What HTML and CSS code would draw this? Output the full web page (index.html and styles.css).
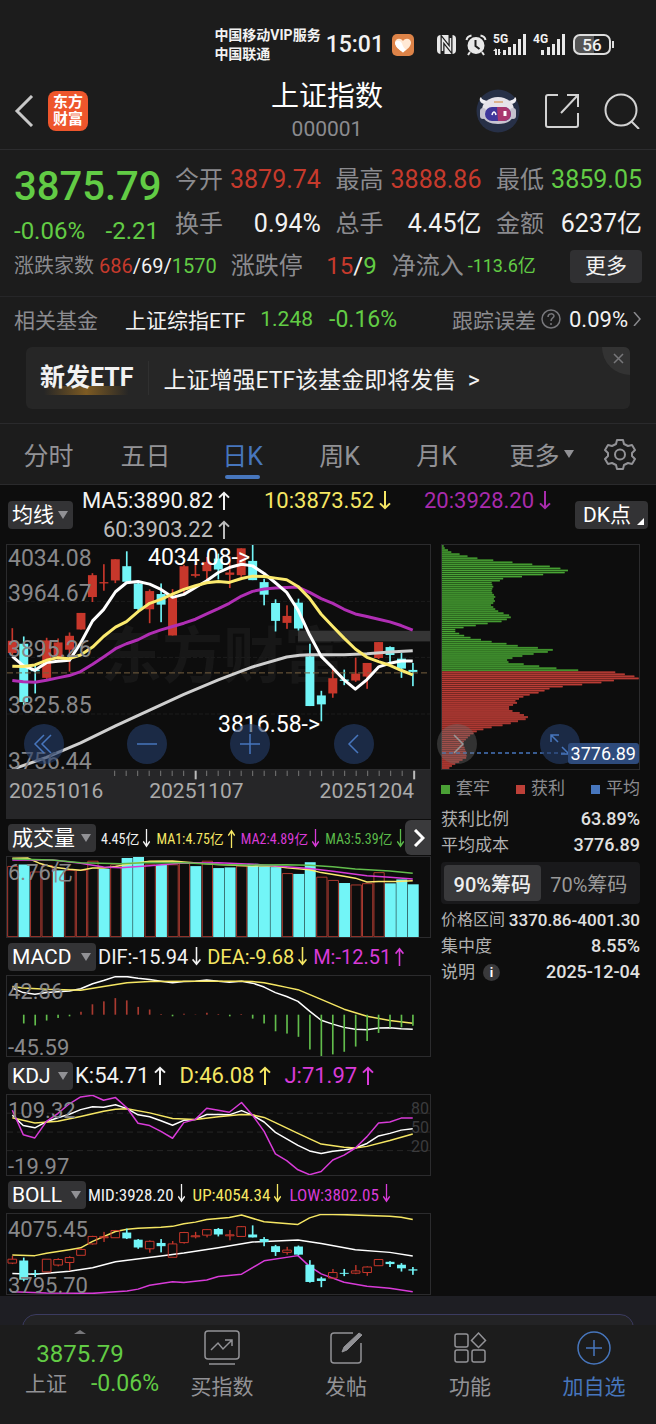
FILE: index.html
```html
<!DOCTYPE html>
<html lang="zh-CN">
<head>
    <meta charset="UTF-8">
    <meta name="viewport" content="width=device-width, initial-scale=1.0">
    <title>上证指数 000001</title>
    <link rel="stylesheet" href="styles.css">
</head>
<body>

<svg class="symbols" width="0" height="0">
    <symbol id="rise" viewBox="0 0 14 20" preserveAspectRatio="none"><path d="M7 20V2M2 7l5-5 5 5"/></symbol>
    <symbol id="fall" viewBox="0 0 14 20" preserveAspectRatio="none"><path d="M7 0v18M2 13l5 5 5-5"/></symbol>
</svg>

<div class="status-bar">
    <div class="carrier"><span>中国移动VIP服务</span><span>中国联通</span></div>
    <span class="clock">15:01</span>
    <svg class="heart" width="22" height="22" viewBox="0 0 22 22">
        <rect width="22" height="22" rx="5" fill="#dd8348"/>
        <path d="M11 18.500C7 15.500 3 12.500 3 8.500 3 4.500 8.500 3 11 7c2.500-4 8-2.500 8 1.500 0 4-4 7-8 10z" fill="#ffe9d5"/>
        <path d="M11 18.500C7 15.500 3 12.500 3 8.500c2-3 6-2 7 1 1 3 2 5 4 6z" fill="#fff"/>
    </svg>
    <svg class="nfc" width="21" height="21" viewBox="0 0 21 21" fill="none">
        <rect x="1" y="1" width="19" height="19" rx="4" fill="#e8e8e8"/>
        <path d="M6.500 21V5.500L14.500 15.500V0" stroke="#1c1c1c" stroke-width="4"/>
        <path d="M6.500 17V5.500L14.500 15.500V4" stroke="#e8e8e8" stroke-width="1.500"/>
    </svg>
    <svg class="alarm" width="22" height="22" viewBox="0 0 22 22" fill="none" stroke="#e8e8e8" stroke-width="2">
        <circle cx="11" cy="11.500" r="7.500" fill="#e8e8e8"/>
        <path d="M1.500 6C2 3.500 4 2 6.500 1.500M20.500 6C20 3.500 18 2 15.500 1.500M5 18l-2 3M17 18l2 3"/>
        <path d="M10.500 6v6l4 3" stroke="#1c1c1c"/>
    </svg>
    <div class="signal">
        <span>5G</span>
        <svg width="34" height="21" viewBox="0 0 34 21" fill="#e8e8e8">
            <path d="M10 16h3v5h-3zM15 13h3v8h-3zM20 10h3v11h-3zM25 5h3v16h-3zM30 0h3v21h-3zM2 15h2v6H2zM0 17l3-3v3zM5 15h2v6H5zM8 18l-2 3v-3z"/>
        </svg>
    </div>
    <div class="signal">
        <span>4G</span>
        <svg width="34" height="21" viewBox="0 0 34 21" fill="#e8e8e8">
            <path d="M8 16h3v5H8zM14 13h3v8h-3zM19 10h3v11h-3zM24 5h3v16h-3zM29 0h3v21h-3z"/>
        </svg>
    </div>
    <span class="battery">56</span>
</div>

<header class="top-bar">
    <div class="top-left">
        <button class="icon-button" aria-label="返回">
            <svg width="20" height="32" viewBox="0 0 20 32" fill="none" stroke="#c8c8c8" stroke-width="3"><path d="M18 1L3 16l15 15"/></svg>
        </button>
        <div class="logo"><span>东方</span><span>财富</span></div>
    </div>
    <div class="title">
        <h1>上证指数</h1>
        <p>000001</p>
    </div>
    <div class="top-right">
        <button class="icon-button" aria-label="智能助手">
            <svg width="44" height="44" viewBox="0 0 44 44">
                <circle cx="22" cy="22" r="21.500" fill="#273047"/>
                <path d="M8 15C3 14 3 9 5 8c1 3 3 3 7 4zM36 15c5-1 5-6 3-7-1 3-3 3-7 4z" fill="#f0eef3"/>
                <ellipse cx="22" cy="21" rx="16" ry="13" fill="#e6e3ea"/>
                <rect x="4" y="19" width="6" height="11" rx="3" fill="#c5c2cf"/>
                <rect x="34" y="19" width="6" height="11" rx="3" fill="#c5c2cf"/>
                <path d="M7 26c0-9 30-9 30 0 0 12-30 12-30 0z" fill="#c8c5d2"/>
                <rect x="9" y="18" width="26" height="14" rx="7" fill="#40389b"/>
                <path d="M21 18h7c9 0 9 14 0 14h-6z" fill="#a9376f"/>
                <path d="M16 26c1-4 3-4 4 0" fill="none" stroke="#fff" stroke-width="1.500"/>
                <path d="M29 22v5" stroke="#fff" stroke-width="3"/>
                <path d="M18 13h9" stroke="#ddb38e" stroke-width="2"/>
            </svg>
        </button>
        <button class="icon-button" aria-label="分享">
            <svg width="36" height="36" viewBox="0 0 36 36" fill="none" stroke="#d2d2d2" stroke-width="2"><path d="M14 2H4a2 2 0 0 0-2 2v28a2 2 0 0 0 2 2h28a2 2 0 0 0 2-2V20M23 2h11v12M34 2L17 20"/></svg>
        </button>
        <button class="icon-button" aria-label="搜索">
            <svg width="36" height="36" viewBox="0 0 36 36" fill="none" stroke="#d2d2d2" stroke-width="2"><circle cx="17" cy="17" r="15.500"/><path d="M27 28l8 8"/></svg>
        </button>
    </div>
</header>

<section class="quote">
    <div class="quote-main">
        <div class="price-box">
            <strong class="price down">3875.79</strong>
            <div class="change down"><span>-0.06%</span><span>-2.21</span></div>
        </div>
        <dl class="facts">
            <div><dt>今开</dt><dd class="up">3879.74</dd></div>
            <div><dt>最高</dt><dd class="up">3888.86</dd></div>
            <div><dt>最低</dt><dd class="down">3859.05</dd></div>
            <div><dt>换手</dt><dd>0.94%</dd></div>
            <div><dt>总手</dt><dd>4.45亿</dd></div>
            <div><dt>金额</dt><dd>6237亿</dd></div>
        </dl>
    </div>
    <div class="quote-more">
        <span class="breadth"><span class="label">涨跌家数</span> <span class="up">686</span>/69/<span class="down">1570</span></span>
        <span class="limit"><span class="label">涨跌停</span><span><span class="up">15</span>/<span class="down">9</span></span></span>
        <span class="flow"><span class="label">净流入</span><span class="down">-113.6亿</span></span>
        <button class="more-button">更多</button>
    </div>
</section>

<section class="fund">
    <span class="label">相关基金</span>
    <a class="fund-name" href="#">上证综指ETF</a>
    <span class="down fund-price">1.248</span>
    <span class="down fund-change">-0.16%</span>
    <span class="label track">跟踪误差</span>
    <svg width="20" height="20" viewBox="0 0 20 20" fill="none" stroke="#77777b" stroke-width="1.500"><circle cx="10" cy="10" r="9"/><path d="M7 8c0-4 6-4 6-1 0 2-3 2-3 5M10 14v2"/></svg>
    <span class="error-rate">0.09%</span>
    <svg width="9" height="14" viewBox="0 0 9 14" fill="none" stroke="#88888c" stroke-width="1.500"><path d="M1 0l6 7-6 7"/></svg>
</section>

<section class="banner">
    <b>新发ETF</b>
    <a href="#">上证增强ETF该基金即将发售&nbsp; &gt;</a>
    <button class="close" aria-label="关闭"><svg width="11" height="11" viewBox="0 0 11 11" stroke="#77777a" stroke-width="1.500"><path d="M1 1l9 9M10 1l-9 9"/></svg></button>
</section>

<nav class="period-tabs">
    <button>分时</button>
    <button>五日</button>
    <button class="active">日K</button>
    <button>周K</button>
    <button>月K</button>
    <button class="more-periods">更多<i class="caret"></i></button>
    <button aria-label="设置">
        <svg width="32" height="32" viewBox="0 0 32 32" fill="none" stroke="#929296" stroke-width="2" stroke-linejoin="round"><path d="M13 2h6l1 4 4 2 4-1 3 5-3 3v3l3 3-3 5-4-1-4 2-1 4h-6l-1-4-4-2-4 1-3-5 3-3v-3l-3-3 3-5 4 1 4-2z"/><circle cx="16" cy="16.500" r="5"/></svg>
    </button>
</nav>

<main class="market">
    <div class="ma-row">
        <button class="chip-button">均线<i class="caret"></i></button>
        <div class="ma-values">
            <span>MA5:3890.82<svg class="arrow"><use href="#rise"/></svg></span>
            <span class="yellow">10:3873.52<svg class="arrow"><use href="#fall"/></svg></span>
            <span class="purple">20:3928.20<svg class="arrow"><use href="#fall"/></svg></span>
            <span class="grey ma60">60:3903.22<svg class="arrow"><use href="#rise"/></svg></span>
        </div>
        <button class="chip-button dk">DK点<i class="corner"></i></button>
    </div>

    <div class="panels">
        <div class="left-column">
            <div class="chart kline">
                <span class="watermark">东方财富</span>
                <svg id="kline" viewBox="18 14 1275 676" preserveAspectRatio="none"></svg>
                <div class="scale"><span>4034.08</span><span>3964.67</span><span>3895.26</span><span>3825.85</span><span>3756.44</span></div>
                <span class="mark high">4034.08-&gt;</span>
                <span class="mark low">3816.58-&gt;</span>
            </div>
            <div class="time-axis">
                <svg id="ticks" viewBox="18 0 1275 30" preserveAspectRatio="none"></svg>
                <div class="dates"><span>20251016</span><span>20251107</span><span>20251204</span></div>
            </div>

            <div class="indicator-head volume-head">
                <button class="chip-button">成交量<i class="caret"></i></button>
                <span>4.45亿<svg class="arrow"><use href="#fall"/></svg></span>
                <span class="yellow">MA1:4.75亿<svg class="arrow"><use href="#rise"/></svg></span>
                <span class="magenta">MA2:4.89亿<svg class="arrow"><use href="#fall"/></svg></span>
                <span class="green">MA3:5.39亿<svg class="arrow"><use href="#fall"/></svg></span>
                <button class="next" aria-label="更多指标"><svg width="12" height="18" viewBox="0 0 12 18" fill="none" stroke="#fff" stroke-width="3"><path d="M2 1l8 8-8 8"/></svg></button>
            </div>
            <div class="chart small">
                <svg id="volume" viewBox="18 109 1275 246" preserveAspectRatio="none"></svg>
                <div class="scale"><span>6.76亿</span></div>
            </div>

            <div class="indicator-head macd-head">
                <button class="chip-button">MACD<i class="caret"></i></button>
                <span>DIF:-15.94<svg class="arrow"><use href="#fall"/></svg></span>
                <span class="yellow">DEA:-9.68<svg class="arrow"><use href="#fall"/></svg></span>
                <span class="magenta">M:-12.51<svg class="arrow"><use href="#rise"/></svg></span>
            </div>
            <div class="chart small">
                <svg id="macd" viewBox="18 106 1275 246" preserveAspectRatio="none"></svg>
                <div class="scale"><span>42.86</span><span>-45.59</span></div>
            </div>

            <div class="indicator-head kdj-head">
                <button class="chip-button">KDJ<i class="caret"></i></button>
                <span>K:54.71<svg class="arrow"><use href="#rise"/></svg></span>
                <span class="yellow">D:46.08<svg class="arrow"><use href="#rise"/></svg></span>
                <span class="magenta">J:71.97<svg class="arrow"><use href="#rise"/></svg></span>
            </div>
            <div class="chart small">
                <svg id="kdj" viewBox="18 103 1275 246" preserveAspectRatio="none"></svg>
                <div class="scale"><span>109.32</span><span>-19.97</span></div>
                <div class="levels"><span>80</span><span>50</span><span>20</span></div>
            </div>

            <div class="indicator-head boll-head">
                <button class="chip-button">BOLL<i class="caret"></i></button>
                <span>MID:3928.20<svg class="arrow"><use href="#fall"/></svg></span>
                <span class="yellow">UP:4054.34<svg class="arrow"><use href="#fall"/></svg></span>
                <span class="magenta">LOW:3802.05<svg class="arrow"><use href="#fall"/></svg></span>
            </div>
            <div class="chart small">
                <svg id="boll" viewBox="18 101 1275 246" preserveAspectRatio="none"></svg>
                <div class="scale"><span>4075.45</span><span>3795.70</span></div>
            </div>
        </div>

        <aside class="chips">
            <div class="chart kline">
                <svg id="chips" viewBox="0 0 596 676" preserveAspectRatio="none"></svg>
                <span class="cost-tag">3776.89</span>
            </div>
            <ul class="legend"><li>套牢</li><li>获利</li><li>平均</li></ul>
            <dl class="chip-facts">
                <div><dt>获利比例</dt><dd>63.89%</dd></div>
                <div><dt>平均成本</dt><dd>3776.89</dd></div>
            </dl>
            <div class="chip-tabs"><button class="active">90%筹码</button><button>70%筹码</button></div>
            <dl class="chip-facts">
                <div class="range"><dt>价格区间</dt><dd>3370.86-4001.30</dd></div>
                <div><dt>集中度</dt><dd>8.55%</dd></div>
                <div><dt>说明<i class="info">i</i></dt><dd>2025-12-04</dd></div>
            </dl>
        </aside>
    </div>

    <div class="chart-controls">
        <button aria-label="最早"><svg viewBox="0 0 40 40"><path d="M20 11l-9 9 9 9M27 11l-9 9 9 9"/></svg></button>
        <button aria-label="缩小"><svg viewBox="0 0 40 40"><path d="M10 20h20"/></svg></button>
        <button aria-label="放大"><svg viewBox="0 0 40 40"><path d="M10 20h20M20 10v20"/></svg></button>
        <button aria-label="向左"><svg viewBox="0 0 40 40"><path d="M24 11l-9 9 9 9"/></svg></button>
        <button aria-label="向右" class="muted"><svg viewBox="0 0 40 40"><path d="M17 11l9 9-9 9"/></svg></button>
        <button aria-label="全屏"><svg viewBox="0 0 40 40"><path d="M18 18l-7-7M11 18v-7h8M22 23l7 7M29 22v8h-8"/></svg></button>
    </div>
</main>

<div class="next-card"><div></div></div>

<footer class="bottom-bar">
    <button class="index-button">
        <i class="caret-up"></i>
        <span class="down">3875.79</span>
        <span class="index-row"><span>上证</span><span class="down">-0.06%</span></span>
    </button>
    <button>
        <svg width="36" height="36" viewBox="0 0 36 36"><rect x="1" y="1" width="34" height="28" rx="3"/><path d="M5 34h26M7 20l7-7 5 6 9-9M21 10h7v6"/></svg>
        <span>买指数</span>
    </button>
    <button>
        <svg width="36" height="36" viewBox="0 0 36 36"><path d="M25 3H6a3 3 0 0 0-3 3v24a3 3 0 0 0 3 3h24a3 3 0 0 0 3-3V13"/><path d="M14 22l2-5L31 3l3 2-15 15z" fill="#929296" stroke-width="1"/></svg>
        <span>发帖</span>
    </button>
    <button>
        <svg width="36" height="36" viewBox="0 0 36 36"><rect x="3" y="4" width="13" height="13" rx="2"/><rect x="3" y="20" width="13" height="12" rx="2"/><rect x="20" y="20" width="13" height="12" rx="2"/><path d="M26.500 3l7 7.500-7 7-7-7z"/></svg>
        <span>功能</span>
    </button>
    <button class="add">
        <svg width="36" height="36" viewBox="0 0 36 36"><circle cx="18" cy="18" r="16"/><path d="M18 10v16M10 18h16"/></svg>
        <span>加自选</span>
    </button>
</footer>

<script src="charts.js"></script>
</body>
</html>
```
FILE: styles.css
```css
* {
    box-sizing: border-box;
}

body {
    margin: 0;
    background-color: #1c1c1c;
    color: #f2f2f2;
    font-family: Roboto, "Noto Sans CJK SC", sans-serif;
    font-size: 21px;
}

h1, p, dl, dd, ul {
    margin: 0;
    padding: 0;
}

button {
    padding: 0;
    border: 0;
    background: none;
    color: inherit;
    font: inherit;
    cursor: pointer;
}

a {
    color: inherit;
    text-decoration: none;
}

i {
    font-style: normal;
}

svg {
    display: block;
    flex: none;
}

.symbols {
    position: absolute;
}

.label { color: #8b8b8f; }
.up { color: #c63a2c; }
.down { color: #62cc45; }
.yellow { color: #f5e663; }
.purple { color: #a82bac; }
.magenta { color: #d83bd8; }
.green { color: #5bbb4a; }
.grey { color: #bcbcbc; }

/* Status bar */
.status-bar {
    display: flex;
    align-items: center;
    justify-content: flex-end;
    height: 75px;
    padding: 14px 45px 0 0;
}

.carrier {
    display: flex;
    flex-direction: column;
    font-size: 14px;
    font-weight: 700;
    line-height: 19px;
}

.clock {
    margin-left: 5px;
    font-size: 23px;
    font-weight: 500;
}

.heart { margin-left: 8px; }
.nfc { margin-left: 22px; }
.alarm { margin-left: 8px; }

.signal {
    position: relative;
    margin-left: 6px;
}

.signal span {
    position: absolute;
    left: 0;
    top: -1px;
    font-size: 12px;
    font-weight: 700;
    line-height: 12px;
}

.battery {
    position: relative;
    width: 38px;
    height: 21px;
    margin-left: 6px;
    border: 2px solid #ddd;
    border-radius: 7px;
    background: linear-gradient(90deg, #555 56%, #1c1c1c 56%);
    font-size: 17px;
    font-weight: 500;
    line-height: 18px;
    text-align: center;
}

.battery::after {
    content: "";
    position: absolute;
    right: -5px;
    top: 5px;
    width: 2px;
    height: 7px;
    background-color: #ddd;
}

/* Header */
.top-bar {
    display: grid;
    grid-template-columns: 1fr auto 1fr;
    align-items: center;
    height: 75px;
    padding: 0 16px 3px 14px;
    border-bottom: 1px solid #2c2c2e;
}

.top-left, .top-right {
    display: flex;
    align-items: center;
    gap: 14px;
}

.top-right {
    justify-content: flex-end;
    gap: 24px;
}

.logo {
    display: flex;
    flex-direction: column;
    align-items: center;
    justify-content: center;
    width: 40px;
    height: 40px;
    border-radius: 8px;
    background-color: #ee562c;
    color: #fff;
    font-size: 15px;
    font-weight: 700;
    line-height: 17px;
}

.title {
    text-align: center;
}

.title h1 {
    color: #fff;
    font-size: 28px;
    font-weight: 400;
    line-height: 36px;
}

.title p {
    color: #8b8b8f;
    font-size: 21px;
    line-height: 28px;
}

/* Quote */
.quote {
    height: 147px;
    padding: 12px 14px 0;
    border-bottom: 1px solid #262628;
}

.quote-main {
    display: flex;
    align-items: flex-start;
    gap: 16px;
}

.price-box {
    width: 145px;
}

.price {
    display: block;
    font-size: 40px;
    font-weight: 500;
    line-height: 50px;
}

.change {
    display: flex;
    justify-content: space-between;
    font-size: 24px;
    line-height: 38px;
}

.facts {
    display: grid;
    flex: 1;
    grid-template-columns: repeat(3, auto);
    justify-content: space-between;
    row-gap: 8px;
    font-size: 25px;
    line-height: 36px;
}

.facts div {
    display: flex;
    align-items: center;
    justify-content: space-between;
    gap: 7px;
}

.facts dt {
    color: #8b8b8f;
    font-size: 24px;
}

.quote-more {
    display: flex;
    align-items: center;
    height: 32px;
    font-size: 24px;
    line-height: 32px;
}

.breadth {
    font-size: 20px;
}

.limit {
    display: flex;
    align-items: center;
    justify-content: space-between;
    width: 146px;
    margin-left: 14px;
}

.flow {
    display: flex;
    align-items: center;
    margin-left: 15px;
}

.flow .down {
    margin-left: 4px;
    font-size: 18px;
}

.more-button {
    width: 72px;
    height: 33px;
    margin-left: auto;
    border-radius: 4px;
    background-color: #303032;
    font-size: 21px;
    line-height: 32px;
}

/* Related fund */
.fund {
    display: flex;
    align-items: center;
    height: 44px;
    padding: 0 14px;
}

.fund-name { margin-left: 27px; }
.fund-price { margin-left: 15px; }

.fund-change {
    margin-left: 16px;
    font-size: 23px;
}

.track { margin-left: auto; }

.fund svg { margin-left: 5px; }

.error-rate {
    margin-left: 8px;
    font-size: 22px;
}

/* Banner */
.banner {
    position: relative;
    display: flex;
    align-items: center;
    height: 62px;
    margin: 6px 26px 14px;
    padding-left: 14px;
    overflow: hidden;
    border-radius: 6px;
    background-color: #262626;
    font-size: 23px;
}

.banner b {
    background: linear-gradient(90deg, transparent, #7d5b23, transparent) bottom / 90% 9px no-repeat;
    font-size: 25px;
    line-height: 34px;
}

.banner a {
    margin-left: 14px;
    padding-left: 15px;
    border-left: 1px solid #303030;
}

.close {
    position: absolute;
    right: 0;
    top: 0;
    display: flex;
    align-items: flex-start;
    width: 28px;
    height: 28px;
    padding: 6px 0 0 11px;
    border-radius: 0 0 0 28px;
    background-color: #333;
}

/* Period tabs */
.period-tabs {
    display: grid;
    grid-template-columns: repeat(5, 97fr) 99fr 72fr;
    height: 62px;
    border-top: 1px solid #2a2a2c;
    border-bottom: 1px solid #2a2a2c;
    color: #929296;
    font-size: 25px;
}

.period-tabs button {
    position: relative;
    display: flex;
    align-items: center;
    justify-content: center;
}

.period-tabs .active {
    color: #4776bd;
}

.period-tabs .active::after {
    content: "";
    position: absolute;
    bottom: 5px;
    width: 35px;
    height: 4px;
    border-radius: 2px;
    background-color: #4776bd;
}

.period-tabs .more-periods {
    padding-left: 14px;
}

.caret {
    display: inline-block;
    margin-left: 4px;
    border: 5px solid transparent;
    border-top: 8px solid #919195;
    border-bottom: 0;
}

/* Market */
.market {
    position: relative;
    padding: 0 16px 1px 6px;
    background-color: #0d0d0d;
}

.ma-row {
    display: flex;
    height: 59px;
    margin-right: -8px;
    font-size: 22px;
}

.chip-button {
    display: flex;
    align-items: center;
    justify-content: space-between;
    flex: none;
    height: 28px;
    padding: 0 5px 0 4px;
    border-radius: 4px;
    background-color: #333335;
    color: #fff;
    font-family: Roboto, "Noto Sans CJK SC", sans-serif;
    font-size: 21px;
    line-height: 28px;
}

.ma-row .chip-button {
    width: 65px;
    margin: 16px 0 0 2px;
}

.ma-row .chip-button .caret {
    margin-left: 0;
}

.ma-row .dk {
    position: relative;
    width: 73px;
    padding-left: 8px;
}

.corner {
    position: absolute;
    right: 4px;
    bottom: 4px;
    border-left: 7px solid transparent;
    border-bottom: 7px solid #fff;
}

.ma-values {
    display: grid;
    flex: 1;
    grid-template-columns: 182px 160px auto;
    justify-content: start;
    margin: 2px 0 0 9px;
    line-height: 28px;
}

.ma60 {
    padding-left: 21px;
}

.arrow {
    display: inline-block;
    width: 14px;
    height: 19px;
    margin-left: 4px;
    vertical-align: -2px;
    fill: none;
    stroke: currentColor;
    stroke-width: 2;
}

.panels {
    display: grid;
    grid-template-columns: 425fr 199fr;
    column-gap: 10px;
}

.chart {
    position: relative;
    border: 1px solid #2b2b2d;
}

.kline {
    height: 226px;
}

.small {
    height: 82px;
}

.chart svg {
    position: relative;
    width: 100%;
    height: 100%;
}

.chart svg * {
    vector-effect: non-scaling-stroke;
}

.watermark {
    position: absolute;
    left: 94px;
    top: 80px;
    color: #171717;
    font-size: 61px;
    font-weight: 700;
    line-height: 64px;
}

.scale {
    position: absolute;
    left: 1px;
    top: 0;
    bottom: 0;
    display: flex;
    flex-direction: column;
    justify-content: space-between;
    color: #88888a;
    font-size: 23px;
    line-height: 28px;
}

/* the top label hangs below its grid line, the others sit on theirs */
.kline .scale {
    display: grid;
    grid-template-rows: 35px repeat(4, 56px);
    justify-content: start;
}

.small .scale {
    top: 2px;
    bottom: -6px;
    font-size: 22px;
}

.levels {
    position: absolute;
    right: 1px;
    top: 4px;
    color: #3b3b3d;
    font-size: 16px;
    line-height: 19px;
}

.levels span {
    display: block;
}

.mark {
    position: absolute;
    color: #fff;
    font-size: 23px;
    line-height: 26px;
}

.high {
    right: 180px;
    top: 0;
}

.low {
    right: 110px;
    top: 167px;
}

.time-axis {
    height: 49px;
    background-color: #262628;
    color: #aaa;
}

.time-axis svg {
    width: 100%;
    height: 10px;
}

.dates {
    display: grid;
    grid-template-columns: 140fr 170fr auto;
    padding: 0 17px 0 3px;
    line-height: 23px;
}

.indicator-head {
    display: flex;
    align-items: center;
    height: 37px;
    padding-left: 2px;
    white-space: nowrap;
}

.indicator-head .chip-button {
    width: 88px;
}

.volume-head,
.boll-head {
    font-family: "Roboto Condensed", "Liberation Sans Narrow", Roboto, "Noto Sans CJK SC", sans-serif;
}

.volume-head {
    position: relative;
    gap: 5px;
    font-size: 14px;
}

.volume-head .arrow,
.boll-head .arrow {
    width: 9px;
    margin-left: 3px;
}

.volume-head .arrow {
    vertical-align: -4px;
}

.next {
    position: absolute;
    right: 0;
    top: 1px;
    width: 26px;
    height: 35px;
    padding-left: 8px;
    border-radius: 6px 0 0 6px;
    background-color: #3a3a3c;
}

.macd-head {
    gap: 5px;
    font-size: 20px;
}

.macd-head .chip-button {
    margin-right: -3px;
}

.macd-head .arrow {
    width: 11px;
    margin-left: 3px;
}

.kdj-head {
    gap: 12px;
    font-size: 22px;
}

.kdj-head .chip-button {
    width: 65px;
    margin-right: -10px;
}

.boll-head {
    gap: 7px;
    font-size: 17px;
}

.boll-head .chip-button {
    width: 78px;
    margin-right: -5px;
}

/* Chip distribution */
.cost-tag {
    position: absolute;
    z-index: 2;
    right: 0;
    bottom: 5px;
    padding: 0 3px;
    border-radius: 3px;
    background-color: #2e4b7c;
    color: #fff;
    font-size: 18px;
    line-height: 21px;
}

.legend {
    display: flex;
    justify-content: space-between;
    color: #8b8b8f;
    font-size: 17px;
    line-height: 36px;
    list-style: none;
}

.legend li::before {
    content: "";
    display: inline-block;
    width: 9px;
    height: 9px;
    margin-right: 6px;
    background-color: #4aa035;
}

.legend li:nth-child(2)::before {
    background-color: #bd4038;
}

.legend li:nth-child(3)::before {
    background-color: #4776bd;
}

.chip-facts {
    color: #e0e0e0;
    font-size: 18px;
    font-weight: 500;
    line-height: 26px;
}

.chip-facts div {
    display: flex;
    justify-content: space-between;
}

.chip-facts dt {
    display: flex;
    align-items: center;
    color: #b0b0b0;
    font-size: 17px;
    font-weight: 400;
}

.chip-facts .range dt {
    font-size: 16px;
}

.chip-facts .range {
    font-size: 17px;
}

.info {
    width: 17px;
    height: 17px;
    margin-left: 8px;
    border-radius: 50%;
    background-color: #39393b;
    color: #fff;
    font-size: 13px;
    font-weight: 700;
    line-height: 17px;
    text-align: center;
}

.chip-tabs {
    display: grid;
    grid-template-columns: 1fr 1fr;
    height: 42px;
    margin: 4px 0 3px;
    padding: 3px;
    border-radius: 4px;
    background-color: #19191b;
    color: #999;
    font-size: 20px;
}

.chip-tabs .active {
    border-radius: 4px;
    background-color: #39393b;
    color: #eee;
    font-weight: 500;
}

.chart-controls {
    position: absolute;
    left: 24px;
    right: 76px;
    top: 239px;
    display: flex;
    justify-content: space-between;
}

.chart-controls button {
    width: 40px;
    height: 40px;
    border-radius: 50%;
    background-color: rgba(37, 62, 105, 0.62);
}

.chart-controls svg {
    fill: none;
    stroke: #4776bd;
    stroke-width: 1.5;
}

.chart-controls .muted {
    background-color: rgba(110, 110, 110, 0.38);
}

.chart-controls .muted svg {
    stroke: #999;
}

/* Bottom */
.next-card {
    height: 29px;
    padding: 18px 22px 0;
    overflow: hidden;
    background-color: #1e1e23;
}

.next-card div {
    height: 40px;
    border: 1px solid #3b3b60;
    border-radius: 14px;
    background-color: #232325;
}

.bottom-bar {
    display: grid;
    grid-template-columns: 160fr repeat(4, 124fr);
    height: 98px;
    color: #929296;
}

.bottom-bar button {
    display: flex;
    flex-direction: column;
    align-items: center;
    padding-top: 5px;
    line-height: 30px;
}

.bottom-bar button > span {
    margin-top: 6px;
}

.bottom-bar svg {
    fill: none;
    stroke: #929296;
    stroke-width: 1.5;
}

.bottom-bar .add {
    color: #4776bd;
}

.bottom-bar .add svg {
    stroke: #4776bd;
}

.caret-up {
    border: 6px solid transparent;
    border-top: 0;
    border-bottom: 4px solid #77777a;
}

.bottom-bar .index-button > span {
    margin-top: 5px;
    font-size: 24px;
    line-height: 30px;
}

.bottom-bar .index-button .index-row {
    display: flex;
    align-items: center;
    gap: 24px;
    margin-top: 0;
    padding-left: 24px;
    font-size: 23px;
}

.index-row span:first-child {
    font-size: 21px;
}
```
FILE: charts.js
```javascript
const RED = '#c7372b';
const CYAN = '#72f5f7';
const STEP = 34.5;
const FIRST_X = 34;

function rect(x, y, w, h, fill, extra) {
    return `<rect x="${x}" y="${y}" width="${w}" height="${h}" fill="${fill}" ${extra || ''}/>`;
}

function line(points, color, width) {
    return `<polyline points="${points}" fill="none" stroke="${color}" stroke-width="${width}" stroke-linejoin="round"/>`;
}

function hline(y, color, dash) {
    return `<path d="M18 ${y}H1293" stroke="${color}" stroke-dasharray="${dash}"/>`;
}

function draw(id, markup) {
    document.getElementById(id).innerHTML = markup;
}

// each item: direction, high, body top, body bottom, low
function candles(data, hollow) {
    return data.map(([dir, high, top, bottom, low], i) => {
        const x = FIRST_X + i * STEP;
        const color = dir === 'r' ? RED : CYAN;
        if (hollow && dir === 'r') {
            return rect(x - 1.5, high, 4, top - high, color) + rect(x - 1.5, bottom, 4, low - bottom, color) +
                rect(x - 13, top, 26, bottom - top, 'none', `stroke="${color}"`);
        }
        return rect(x - 2.5, high, 5, low - high, color) + rect(x - 13.5, top, 27, bottom - top, color);
    }).join('');
}

const days = [
    ['r', 265, 303, 340, 348], ['c', 290, 312, 488, 498], ['c', 378, 390, 395, 462], ['r', 294, 302, 415, 418],
    ['r', 296, 308, 352, 360], ['r', 278, 288, 330, 396], ['r', 219, 219, 269, 269], ['r', 99, 105, 171, 186],
    ['r', 72, 126, 130, 152], ['r', 57, 57, 121, 129], ['c', 33, 78, 125, 130], ['c', 125, 130, 207, 212],
    ['r', 148, 153, 208, 250], ['c', 130, 162, 194, 247], ['r', 147, 172, 287, 287], ['r', 74, 78, 150, 160],
    ['r', 70, 102, 107, 112], ['r', 50, 65, 93, 118], ['c', 40, 55, 88, 118], ['r', 48, 97, 104, 144],
    ['r', 24, 24, 105, 110], ['c', 13, 62, 120, 120], ['c', 116, 126, 164, 196], ['c', 178, 189, 243, 275],
    ['r', 196, 228, 249, 267], ['c', 176, 188, 266, 272], ['c', 312, 350, 500, 500], ['c', 454, 468, 495, 546],
    ['r', 387, 416, 462, 475], ['c', 390, 420, 424, 437], ['r', 354, 402, 423, 427], ['r', 370, 370, 411, 448],
    ['r', 307, 307, 355, 358], ['c', 320, 322, 346, 368], ['c', 340, 357, 387, 415], ['c', 370, 391, 397, 440]
];

draw('kline',
    [184, 353, 524].map(y => hline(y, '#1d1d1d', '4 2')).join('') +
    rect(895, 273, 398, 32, '#353535') +
    candles(days, false) +
    hline(400, '#77603f', '6 3') +
    line('34,691 137,655 240,611 345,560 448,512 551,465 655,421 758,382 861,352 900,347 930,345 1034,345 1103,342 1172,337 1241,333', '#cfcfcf', 3) +
    line('34,423 67,427 102,428 137,422 171,415 206,408 240,396 276,374 309,352 345,327 378,312 413,300 448,282 482,270 517,260 551,250 586,238 620,222 655,206 688,190 725,168 758,154 793,147 827,144 861,142 895,141 930,157 965,176 1000,190 1034,208 1068,222 1103,230 1138,238 1172,246 1206,257 1241,271', '#b02eb4', 3) +
    line('34,350 67,378 102,392 137,369 171,365 206,362 240,310 276,243 309,209 345,155 378,128 413,124 448,132 482,148 517,172 551,163 586,142 620,122 655,97 688,82 725,72 758,77 793,100 827,128 861,157 895,210 930,285 965,350 1000,385 1034,421 1068,449 1103,420 1138,382 1172,371 1206,364 1241,364', '#fff', 3) +
    line('34,380 67,381 102,376 137,362 171,354 206,357 240,346 276,322 309,290 345,262 378,245 413,215 448,190 482,178 517,162 551,148 586,137 620,128 655,124 688,127 725,115 758,108 793,109 827,114 861,119 895,139 930,175 965,223 1000,260 1034,295 1068,328 1103,353 1138,366 1172,377 1206,392 1241,406', '#fbea6e', 3)
);

// time axis, one tick per day
let ticks = '';
for (let i = 9; i < 36; i++) {
    const major = i === 16 || i === 35;
    ticks += rect(FIRST_X + i * STEP - 2, 2, major ? 6 : 3, major ? 26 : 16, major ? '#bbb' : '#777');
}
draw('ticks', ticks);

const volumes = [138, 132, 155, 135, 150, 150, 150, 122, 145, 133, 112, 109, 133, 133, 133, 128, 137, 122,
    143, 141, 137, 130, 138, 140, 160, 161, 125, 171, 181, 189, 195, 191, 157, 190, 178, 193];
const volumeDirs = 'rcrrcrrrcrccrcrrcrccrcccrccrrcrrrccc';

draw('volume',
    volumes.map((top, i) => {
        const x = 18 + i * STEP;
        return volumeDirs[i] === 'r'
            ? rect(x + 2, top, 31, 354 - top, 'none', 'stroke="#a93a30"')
            : rect(x + 0.5, top, 33, 355 - top, CYAN);
    }).join('') +
    line('34,113 80,112 115,128 155,140 206,147 240,150 276,143 309,143 345,138 395,129 448,122 517,121 551,124 640,131 740,136 820,137 861,142 930,148 965,157 1034,168 1068,174 1103,186 1138,184 1190,184 1241,182', '#fbea6e', 1.5) +
    line('34,118 155,118 240,128 309,140 361,142 448,136 540,128 655,127 758,131 861,139 930,144 1000,153 1068,162 1103,167 1172,171 1241,177', '#d83bd8', 1.5) +
    line('34,115 155,118 240,127 300,128 360,130 448,126 551,127 655,132 758,134 861,133 930,134 1000,139 1068,146 1172,152 1241,159', '#62bd4c', 1.5)
);

const macdZero = 225;
const macdBars = [225, 252, 258, 243, 235, 230, 216, 193, 184, 174, 181, 201, 209, 223, 230, 222, 224, 219,
    223, 230, 223, 237, 252, 276, 283, 293, 332, 353, 347, 339, 323, 306, 281, 265, 264, 259];

draw('macd',
    line('34,143 67,157 102,162 137,157 206,152 240,145 276,130 309,120 345,108 380,108 413,113 448,117 482,122 517,127 551,123 586,122 620,118 655,122 688,125 725,122 758,128 793,140 827,157 861,169 895,184 930,214 965,242 1000,254 1034,264 1068,270 1103,271 1138,266 1172,265 1206,268 1241,270', '#fff', 1.5) +
    line('34,138 67,143 137,147 240,150 309,138 380,127 448,123 586,122 725,122 758,123 793,127 827,134 861,141 895,148 965,178 1034,208 1103,230 1172,243 1241,251', '#f5e663', 1.5) +
    macdBars.map((end, i) => rect(FIRST_X + i * STEP - 2.5, Math.min(end, macdZero), 5,
        Math.abs(end - macdZero), end > macdZero ? '#62bd4c' : '#a93a30')).join('')
);

draw('kdj',
    [159, 217, 274].map(y => hline(y, '#262626', '6 4')).join('') +
    line('34,165 67,197 102,204 137,185 171,173 206,162 240,148 276,139 309,141 345,133 380,145 413,164 448,170 482,182 517,196 551,181 586,178 620,163 655,163 688,164 725,151 758,165 793,186 827,218 861,238 895,258 930,275 965,283 1000,276 1034,272 1068,266 1103,252 1138,229 1172,221 1206,211 1241,207', '#fff', 1.5) +
    line('34,173 102,189 171,184 240,169 309,153 345,147 380,145 448,158 517,175 586,178 655,170 725,163 758,164 793,172 827,188 895,221 965,254 1034,264 1068,266 1103,261 1172,243 1241,223', '#f5e663', 1.5) +
    line('34,150 67,225 102,235 137,184 171,160 206,130 240,109 276,104 309,119 345,111 380,143 413,190 448,197 482,215 517,236 551,188 586,178 620,144 655,150 688,156 725,126 758,165 793,215 827,284 861,305 895,333 930,348 965,338 1000,303 1034,288 1068,266 1103,231 1138,189 1172,186 1206,174 1241,174', '#d83bd8', 1.5)
);

const bollDays = [
    ['r', 230, 240, 252, 255], ['c', 235, 244, 303, 308], ['c', 273, 283, 286, 295], ['r', 240, 240, 279, 279],
    ['r', 237, 241, 258, 262], ['r', 231, 235, 250, 275], ['r', 207, 210, 228, 228], ['r', 168, 170, 193, 195],
    ['r', 156, 171, 174, 187], ['r', 150, 152, 174, 174], ['c', 146, 158, 176, 178], ['c', 178, 180, 204, 208],
    ['r', 182, 185, 208, 220], ['c', 178, 190, 200, 219], ['r', 184, 193, 234, 234], ['r', 156, 158, 189, 192],
    ['r', 156, 168, 171, 176], ['r', 147, 149, 166, 173], ['c', 144, 147, 164, 170], ['r', 150, 165, 168, 182],
    ['r', 138, 140, 170, 170], ['c', 136, 164, 173, 173], ['c', 172, 178, 187, 200], ['c', 196, 200, 218, 230],
    ['r', 202, 212, 219, 226], ['c', 198, 201, 226, 228], ['c', 243, 257, 310, 312], ['c', 294, 299, 307, 326],
    ['r', 270, 281, 298, 300], ['c', 270, 282, 285, 292], ['r', 258, 276, 283, 286], ['r', 262, 264, 281, 291],
    ['r', 240, 241, 260, 260], ['c', 246, 248, 255, 264], ['c', 252, 257, 268, 278], ['c', 264, 271, 275, 288]
];

draw('boll',
    line('34,284 102,286 206,277 276,266 345,248 482,230 551,221 655,205 758,187 895,181 965,192 1068,211 1172,219 1241,230', '#fff', 1.5) +
    line('34,227 102,229 137,222 206,211 240,205 276,185 345,155 380,148 413,145 482,142 517,139 551,131 586,126 620,118 688,112 725,104 793,125 895,133 930,113 965,102 1034,103 1172,108 1206,111 1241,118', '#f5e663', 1.5) +
    line('34,340 137,344 276,345 380,338 413,332 448,320 517,309 551,312 620,304 655,293 725,286 793,245 895,229 930,262 965,285 1034,311 1103,323 1172,329 1241,340', '#d83bd8', 1.5) +
    candles(bollDays, true)
);

// holdings by price level, highest price first
const losing = [5, 8, 18, 28, 53, 77, 107, 155, 213, 273, 326, 358, 381, 371, 306, 242, 185, 175, 150, 152, 155,
    152, 150, 152, 157, 161, 157, 160, 155, 148, 155, 161, 170, 186, 203, 208, 196, 180, 138, 102, 65, 40, 40, 52,
    67, 86, 118, 150, 195, 229, 290, 335, 320, 277, 243, 213, 197, 201, 247, 294, 346, 412];
const winning = [524, 553, 582, 595, 520, 482, 424, 365, 325, 310, 292, 265, 246, 233, 222, 227, 215, 203, 203,
    213, 235, 248, 260, 253, 230, 208, 183, 150, 125, 105, 95, 85, 78, 72, 66, 62, 65, 68, 70, 73, 73, 74, 73, 62,
    52, 40, 30, 22];
const rowHeight = 676 / (losing.length + winning.length);

function level(width, i, base, light) {
    const y = i * rowHeight;
    return rect(0, y, width, rowHeight + 0.3, base) + rect(0, y + 1.5, width, 3, light);
}

draw('chips',
    losing.map((w, i) => level(w, i, '#2c661f', '#4ba637')).join('') +
    winning.map((w, i) => level(w, i + losing.length, '#872d28', '#bd3e37')).join('') +
    '<path d="M0 628H400" stroke="#4776bd" stroke-width="1.5" stroke-dasharray="4 3"/>'
);
```
